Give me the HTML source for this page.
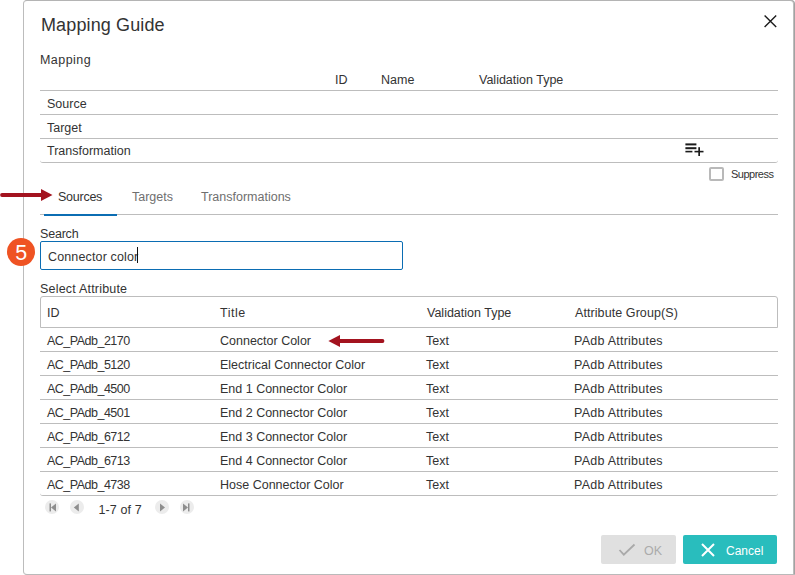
<!DOCTYPE html>
<html><head><meta charset="utf-8">
<style>
html,body{margin:0;padding:0;background:#fff;width:795px;height:575px;overflow:hidden;position:relative;font-family:"Liberation Sans",sans-serif;color:#333;}
.a{position:absolute;white-space:nowrap;line-height:16px;font-size:12.5px;}
.ln{position:absolute;height:1px;background:#bdbdbd;}
#dlg{position:absolute;left:23px;top:0;width:769px;height:573px;border-top:1px solid #b4b4b4;border-left:1px solid #bcbcbc;border-right:1px solid #bdbdbd;border-bottom:1px solid #bababa;box-shadow:1px 0 0 #a2a2a2;border-radius:4px 4px 1px 4px;background:#fff;}
</style></head><body>
<div id="dlg"></div>

<!-- title -->
<div class="a" style="left:41px;top:15px;font-size:18px;line-height:20px;letter-spacing:0.12px;">Mapping Guide</div>
<svg style="position:absolute;left:763px;top:14px" width="15" height="14" viewBox="0 0 15 14"><path d="M1.6 1.5 L13.2 12.9 M13.2 1.5 L1.6 12.9" stroke="#1b1b1b" stroke-width="1.4" fill="none"/></svg>

<div class="a" style="left:40px;top:52px;letter-spacing:0.45px;">Mapping</div>
<div class="a" style="left:335px;top:72px;">ID</div>
<div class="a" style="left:381px;top:72px;">Name</div>
<div class="a" style="left:479px;top:72px;">Validation Type</div>
<div class="ln" style="left:40px;top:90px;width:738px;"></div>
<div class="a" style="left:47px;top:96px;">Source</div>
<div class="ln" style="left:40px;top:114px;width:738px;"></div>
<div class="a" style="left:47px;top:120px;">Target</div>
<div class="ln" style="left:40px;top:138px;width:738px;"></div>
<div class="a" style="left:47px;top:143px;">Transformation</div>
<div style="position:absolute;left:40px;top:158px;width:738px;height:4px;border-bottom:1px solid #bdbdbd;border-radius:0 0 3px 3px;"></div>


<!-- list add icon -->
<svg style="position:absolute;left:684px;top:142px" width="22" height="16" viewBox="0 0 22 16"><g fill="#1b1b1b"><rect x="1.4" y="1.4" width="11" height="2"/><rect x="1.4" y="5.2" width="11" height="2"/><rect x="1.4" y="8.8" width="7" height="1.6"/><rect x="10.5" y="8.8" width="9" height="1.6"/><rect x="14.3" y="5.2" width="1.7" height="8.8"/></g></svg>
<div style="position:absolute;left:709px;top:167px;width:11px;height:10px;border:2px solid #b9b9b9;border-radius:2px;"></div>
<div class="a" style="left:731px;top:166px;font-size:11px;letter-spacing:-0.5px;">Suppress</div>

<!-- arrow 1 -->
<svg style="position:absolute;left:0;top:186px" width="56" height="18" viewBox="0 0 56 18"><line x1="2" y1="9" x2="42" y2="9" stroke="#a3131f" stroke-width="3.8" stroke-linecap="round"/><path d="M41 3 L52.5 9 L41 15 Z" fill="#a3131f"/></svg>

<!-- tabs -->
<div class="a" style="left:58px;top:189px;color:#333;letter-spacing:-0.25px;">Sources</div>
<div class="a" style="left:132px;top:189px;color:#6f6f6f;">Targets</div>
<div class="a" style="left:201px;top:189px;color:#6f6f6f;">Transformations</div>
<div class="ln" style="left:40px;top:214px;width:738px;"></div>
<div style="position:absolute;left:44px;top:214px;width:73px;height:2px;background:#0b6db3;"></div>

<div class="a" style="left:40px;top:226px;letter-spacing:-0.2px;">Search</div>
<div style="position:absolute;left:40px;top:241px;width:361px;height:27px;border:1px solid #0b6db3;border-radius:2px;"></div>
<div class="a" style="left:48px;top:249px;letter-spacing:0.14px;">Connector color</div>
<div style="position:absolute;left:137px;top:247px;width:1px;height:16px;background:#111;"></div>
<div style="position:absolute;left:6.7px;top:237.6px;width:28.7px;height:28.7px;border-radius:50%;background:#ef5323;"></div>
<div class="a" style="left:6.3px;top:241.5px;width:30px;text-align:center;font-size:21.5px;line-height:22px;color:#fff;">5</div>

<div class="a" style="left:40px;top:281px;letter-spacing:0.2px;">Select Attribute</div>

<!-- attribute table -->
<div style="position:absolute;left:40px;top:296px;width:736px;height:30px;border:1px solid #bdbdbd;border-radius:3px 3px 0 0;"></div>
<div class="a" style="left:47px;top:305px;">ID</div>
<div class="a" style="left:220px;top:305px;letter-spacing:0.5px;">Title</div>
<div class="a" style="left:427px;top:305px;">Validation Type</div>
<div class="a" style="left:575px;top:305px;letter-spacing:0.08px;">Attribute Group(S)</div>
<div class="a" style="left:47px;top:333px;letter-spacing:-0.5px;">AC_PAdb_2170</div><div class="a" style="left:220px;top:333px;">Connector Color</div><div class="a" style="left:426px;top:333px;">Text</div><div class="a" style="left:574px;top:333px;letter-spacing:0.24px;">PAdb Attributes</div>
<div class="ln" style="left:40px;top:351px;width:738px;"></div>
<div class="a" style="left:47px;top:357px;letter-spacing:-0.5px;">AC_PAdb_5120</div><div class="a" style="left:220px;top:357px;">Electrical Connector Color</div><div class="a" style="left:426px;top:357px;">Text</div><div class="a" style="left:574px;top:357px;letter-spacing:0.24px;">PAdb Attributes</div>
<div class="ln" style="left:40px;top:375px;width:738px;"></div>
<div class="a" style="left:47px;top:381px;letter-spacing:-0.5px;">AC_PAdb_4500</div><div class="a" style="left:220px;top:381px;">End 1 Connector Color</div><div class="a" style="left:426px;top:381px;">Text</div><div class="a" style="left:574px;top:381px;letter-spacing:0.24px;">PAdb Attributes</div>
<div class="ln" style="left:40px;top:399px;width:738px;"></div>
<div class="a" style="left:47px;top:405px;letter-spacing:-0.5px;">AC_PAdb_4501</div><div class="a" style="left:220px;top:405px;">End 2 Connector Color</div><div class="a" style="left:426px;top:405px;">Text</div><div class="a" style="left:574px;top:405px;letter-spacing:0.24px;">PAdb Attributes</div>
<div class="ln" style="left:40px;top:423px;width:738px;"></div>
<div class="a" style="left:47px;top:429px;letter-spacing:-0.5px;">AC_PAdb_6712</div><div class="a" style="left:220px;top:429px;">End 3 Connector Color</div><div class="a" style="left:426px;top:429px;">Text</div><div class="a" style="left:574px;top:429px;letter-spacing:0.24px;">PAdb Attributes</div>
<div class="ln" style="left:40px;top:447px;width:738px;"></div>
<div class="a" style="left:47px;top:453px;letter-spacing:-0.5px;">AC_PAdb_6713</div><div class="a" style="left:220px;top:453px;">End 4 Connector Color</div><div class="a" style="left:426px;top:453px;">Text</div><div class="a" style="left:574px;top:453px;letter-spacing:0.24px;">PAdb Attributes</div>
<div class="ln" style="left:40px;top:471px;width:738px;"></div>
<div class="a" style="left:47px;top:477px;letter-spacing:-0.5px;">AC_PAdb_4738</div><div class="a" style="left:220px;top:477px;">Hose Connector Color</div><div class="a" style="left:426px;top:477px;">Text</div><div class="a" style="left:574px;top:477px;letter-spacing:0.24px;">PAdb Attributes</div>
<div style="position:absolute;left:40px;top:491px;width:738px;height:4px;border-bottom:1px solid #bdbdbd;border-radius:0 0 3px 3px;"></div>

<!-- arrow 2 -->
<svg style="position:absolute;left:326px;top:332px" width="60" height="18" viewBox="0 0 60 18"><line x1="13" y1="9" x2="56.5" y2="9" stroke="#a3131f" stroke-width="3.8" stroke-linecap="round"/><path d="M14 3 L2.4 9 L14 15 Z" fill="#a3131f"/></svg>

<!-- pager -->
<div style="position:absolute;left:45.3px;top:500px;width:14px;height:14px;border-radius:50%;background:#ececec;"></div>
<div style="position:absolute;left:70.4px;top:500px;width:14px;height:14px;border-radius:50%;background:#ececec;"></div>
<div style="position:absolute;left:154.5px;top:500px;width:14px;height:14px;border-radius:50%;background:#ececec;"></div>
<div style="position:absolute;left:179.6px;top:500px;width:14px;height:14px;border-radius:50%;background:#ececec;"></div>
<svg style="position:absolute;left:0;top:495px" width="200" height="25" viewBox="0 0 200 25"><g fill="#8e8e8e">
<rect x="49.5" y="8.4" width="1.5" height="8"/><path d="M56 8.6 L51 12.5 L56 16.4 Z"/>
<path d="M78.8 8.6 L73.8 12.5 L78.8 16.4 Z"/>
<path d="M160 8.6 L165 12.5 L160 16.4 Z"/>
<path d="M183 8.6 L188 12.5 L183 16.4 Z"/><rect x="188" y="8.4" width="1.5" height="8"/>
</g></svg>
<div class="a" style="left:98.5px;top:502px;letter-spacing:0.1px;">1-7 of 7</div>

<!-- buttons -->
<div style="position:absolute;left:601px;top:535px;width:75px;height:29px;border-radius:2px;background:#e0e0e0;"></div>
<svg style="position:absolute;left:617px;top:543px" width="20" height="14" viewBox="0 0 20 14"><path d="M2.5 7 L6.8 11.6 L17.5 1.5" stroke="#a9a9a9" stroke-width="1.8" fill="none"/></svg>
<div class="a" style="left:644px;top:543px;color:#ababab;">OK</div>
<div style="position:absolute;left:683px;top:535px;width:94px;height:29px;border-radius:2px;background:#29bdbd;"></div>
<svg style="position:absolute;left:700px;top:542px" width="16" height="16" viewBox="0 0 16 16"><path d="M2 2 L14 14 M14 2 L2 14" stroke="#fff" stroke-width="2" fill="none"/></svg>
<div class="a" style="left:726px;top:543px;color:#fff;font-size:12px;">Cancel</div>
</body></html>
